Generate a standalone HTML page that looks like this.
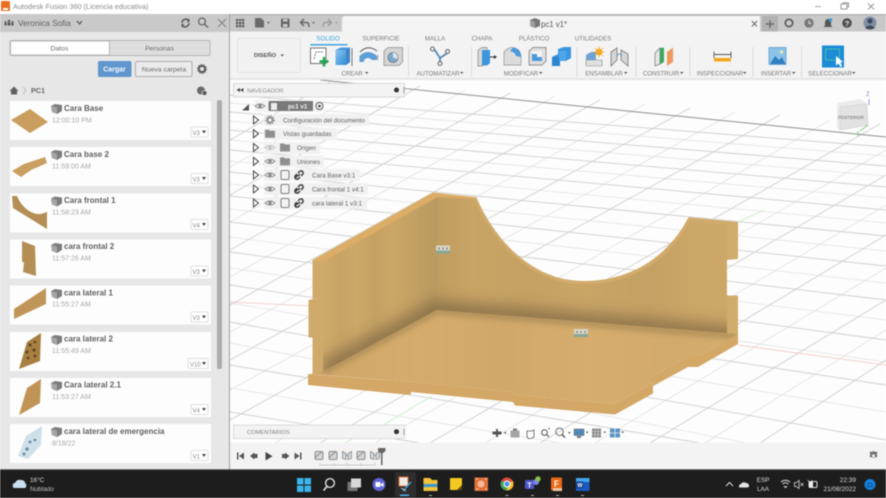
<!DOCTYPE html>
<html lang="es"><head><meta charset="utf-8"><title>Autodesk Fusion 360</title>
<style>
html,body{margin:0;padding:0;width:886px;height:498px;overflow:hidden;background:#fff}
svg{display:block;filter:blur(.45px)}
text{font-family:"Liberation Sans",sans-serif}
</style></head><body>
<svg xmlns="http://www.w3.org/2000/svg" width="886" height="498" viewBox="0 0 886 498">
<defs>
<linearGradient id="lw" x1="0" x2="1" y1="0" y2="0"><stop offset="0" stop-color="#cfaa6a"/><stop offset=".15" stop-color="#c7a365"/><stop offset=".3" stop-color="#cda868"/><stop offset=".45" stop-color="#c5a164"/><stop offset=".6" stop-color="#cba666"/><stop offset=".8" stop-color="#c3a063"/><stop offset="1" stop-color="#b99a60"/></linearGradient>
<linearGradient id="bw" x1="0" x2="1" y1="0" y2="0"><stop offset="0" stop-color="#bf9d60"/><stop offset=".12" stop-color="#c8a465"/><stop offset=".3" stop-color="#c5a163"/><stop offset=".5" stop-color="#c9a566"/><stop offset=".7" stop-color="#c4a164"/><stop offset=".85" stop-color="#cba667"/><stop offset="1" stop-color="#cda868"/></linearGradient>
<linearGradient id="fl" x1="0" x2="1" y1="0" y2="0"><stop offset="0" stop-color="#cfa668"/><stop offset=".25" stop-color="#d5ac6c"/><stop offset=".45" stop-color="#d0a869"/><stop offset=".65" stop-color="#d6ad6e"/><stop offset=".85" stop-color="#d2aa6b"/><stop offset="1" stop-color="#d6ae6f"/></linearGradient>
<linearGradient id="blue" x1="0" x2="1" y1="0" y2="1"><stop offset="0" stop-color="#8cc6ee"/><stop offset="1" stop-color="#2f8fd6"/></linearGradient>
<filter id="b3" x="-30%" y="-50%" width="160%" height="200%"><feGaussianBlur stdDeviation="7"/></filter>
<filter id="b2" x="-30%" y="-50%" width="160%" height="200%"><feGaussianBlur stdDeviation="3"/></filter>
<clipPath id="wallclip"><path d="M323 261 L437 197 L476 198 C496 245 535 284 583 284 C632 284 668 258 688 218 L738 222 L738 343 L323 372Z"/></clipPath>
<clipPath id="floorclip"><path d="M310 374 L323 371.500 L436.700 310 L738 334 L698 357 L688 357 L645 380 L653 383 L615 404 L515 395 L513 392 L411.500 382Z"/></clipPath>
<g id="cube3d"><path d="M0 2 L4 0 L11 1 L11 7 L6 10 L1 8Z" fill="#7d7d7d"/><path d="M0 2 L6 3.500 L6 10 L1 8Z" fill="#a5a5a5"/></g>
<g id="eye"><path d="M-5 0 Q0 -4 5 0 Q0 4 -5 0Z" fill="none" stroke="#8a8a8a"/><circle r="1.700" fill="#8a8a8a"/></g>
<path id="arr" d="M-2.500 -4 L2.500 0 L-2.500 4Z" fill="#fff" stroke="#444" stroke-width="1"/>
<g id="fold"><path d="M-5 -4 H-1 L0 -3 H5 V4 H-5Z" fill="#8f8f8f"/></g>
<g id="body"><rect x="-4" y="-4.500" width="8" height="9" rx="1.500" fill="#f3f3f3" stroke="#808080"/></g>
<g id="lnk" fill="none" stroke="#3a3a3a" stroke-width="1.400"><path d="M-4 3 L-1 0 M1 -4 L3 -4 L4 -3 L4 -1 L2 1 M-2 -1 L-4 1 L-4 3 L-3 4 L-1 4 L1 2 M-1 -2 L1 -4"/><path d="M-1 1 L1 -1"/></g>
<g id="tl"><rect x="-4" y="-4" width="8" height="8" rx="1.500" fill="#d5d5d5" stroke="#8c8c8c"/><path d="M-4 2 L3 -4" stroke="#8c8c8c"/></g>
<g id="tl2"><path d="M-4.500 -4 L-1 -2 L-1 4 L-4.500 3Z M4.500 -4 L1 -2 L1 4 L4.500 3Z" fill="#d5d5d5" stroke="#8c8c8c" stroke-width=".8"/><path d="M-1 0 L1 0" stroke="#5a9bd0"/></g>
<g id="badge"><rect x="-17" y="0" width="17" height="10" fill="#fff" stroke="#d6d6d6" stroke-width=".8" rx="1"/><path d="M-6 3.500 H-2 L-4 6.500Z" fill="#444"/></g>
</defs>

<rect width="886" height="498" fill="#fff"/>

<!-- Title bar -->
<rect x="0" y="0" width="886" height="14" fill="#fff"/>
<rect x="1" y="1" width="9" height="10" fill="#e96f1f" rx="1"/><rect x="3" y="8" width="5" height="2" fill="#fff"/>
<text x="13" y="9" font-size="7.300" fill="#8a8a8a">Autodesk Fusion 360 (Licencia educativa)</text>
<path d="M815 6.500H821" stroke="#aaa"/><rect x="841" y="4" width="6" height="5" fill="none" stroke="#999"/><path d="M843 4V2.800H848.500V7H847" fill="none" stroke="#999"/>
<path d="M868 3.500L874 9.500M874 3.500L868 9.500" stroke="#999"/>

<!-- Left panel -->
<rect x="0" y="14" width="230" height="456" fill="#e7e7e7"/>
<rect x="0" y="14" width="230" height="18" fill="#c9c9c9"/>
<g fill="#5a5a5a"><circle cx="9" cy="21" r="1.300"/><rect x="7.500" y="22.500" width="3" height="3"/><circle cx="5.500" cy="22" r="1"/><rect x="4.400" y="23" width="2.300" height="2.500"/><circle cx="12.500" cy="22" r="1"/><rect x="11.300" y="23" width="2.300" height="2.500"/></g>
<text x="18" y="26" font-size="8.200" fill="#5f5f5f">Veronica Sofia</text>
<path d="M77 21 L79.500 24 L82 21" fill="none" stroke="#555" stroke-width="1.200"/>
<g fill="none" stroke="#5a5a5a" stroke-width="1.500"><path d="M182 23 A4 4 0 0 1 189 20.500"/><path d="M189 23 A4 4 0 0 1 182 25.500"/></g>
<path d="M189.500 18.500V22H186.500Z M181.500 27.500V24H184.500Z" fill="#5a5a5a"/>
<circle cx="202" cy="21.500" r="3.400" fill="none" stroke="#666" stroke-width="1.300"/><path d="M204.500 24L208 27.500" stroke="#666" stroke-width="1.500"/>
<path d="M218 19L226 27M226 19L218 27" stroke="#808080" stroke-width="1"/>

<rect x="10" y="40.500" width="200" height="15" fill="#dedede" stroke="#b5b5b5" rx="1.500"/>
<rect x="10.500" y="41" width="99" height="14" fill="#fff" stroke="#b5b5b5" rx="1"/>
<text x="59.500" y="50.500" font-size="6.800" fill="#6a6a6a" text-anchor="middle">Datos</text>
<text x="159.500" y="50.500" font-size="6.800" fill="#6a6a6a" text-anchor="middle">Personas</text>
<rect x="98" y="61" width="33.500" height="16" fill="#5f96cd" rx="1.500"/>
<text x="114.500" y="71.500" font-size="7" font-weight="bold" fill="#f2f6fb" text-anchor="middle">Cargar</text>
<rect x="135.500" y="61.500" width="56.500" height="15" fill="#ebebeb" stroke="#aeaeae" rx="1.500"/>
<text x="164" y="71.500" font-size="6.800" fill="#6a6a6a" text-anchor="middle">Nueva carpeta</text>
<circle cx="202" cy="69" r="3" fill="none" stroke="#585858" stroke-width="2"/><circle cx="202" cy="69" r="4.500" fill="none" stroke="#585858" stroke-width="1" stroke-dasharray="1.500 1.300"/>
<path d="M9.500 91 L14 86.500 L18.500 91 H17V94.500H11V91Z" fill="#606060"/>
<path d="M23 87 L26 90.500 L23 94" fill="none" stroke="#c0c0c0"/>
<text x="31" y="93" font-size="7.200" font-weight="bold" fill="#666">PC1</text>
<circle cx="201" cy="90.500" r="4" fill="#6a6a6a"/><circle cx="204.500" cy="93" r="2.500" fill="#555" stroke="#e7e7e7" stroke-width=".7"/>

<!-- Cards -->
<g>
<rect x="10" y="101" width="201" height="39" fill="#fdfdfd"/>
<rect x="10" y="147" width="201" height="39" fill="#fdfdfd"/>
<rect x="10" y="193.500" width="201" height="39" fill="#fdfdfd"/>
<rect x="10" y="239.500" width="201" height="39" fill="#fdfdfd"/>
<rect x="10" y="285.500" width="201" height="39" fill="#fdfdfd"/>
<rect x="10" y="332" width="201" height="39" fill="#fdfdfd"/>
<rect x="10" y="378" width="201" height="39" fill="#fdfdfd"/>
<rect x="10" y="424" width="201" height="39" fill="#fdfdfd"/>
</g>
<g fill="#c99e5e">
<path d="M11 120 L30 109 L48 122 L30 133Z"/>
<path d="M12 171 L24 164 L45 157 L47 163 L31 170 L21 177Z"/>
<path d="M12 196 L17 196 C22 208 32 215 41 214 L47 212 L47 229 L13 208Z" fill="#b58e55"/>
<path d="M22 241 L35 246 L36 276 L23 272 L24 262 L22 262Z" fill="#b58e55"/>
<path d="M14 309 L14 319 L46 304 L46 288 Z" fill="#c09658"/>
<path d="M27 342 L41 333 L40 361 L19 369Z" fill="#a87f40"/>
<path d="M27 388 L41 379 L40 403 L19 415Z" fill="#c09456"/>
<path d="M26 436 L42 426 L41 445 L28 459 L18 456Z" fill="#cfe0ea"/>
</g>
<g fill="#5c4325"><circle cx="30" cy="345" r="1.500"/><circle cx="35" cy="342" r="1.300"/><circle cx="27" cy="352" r="1.500"/><circle cx="34" cy="350" r="1.600"/><circle cx="28" cy="358" r="1.300"/><circle cx="35" cy="356" r="1.400"/></g>
<g fill="#6f8ea5"><circle cx="30" cy="442" r="1.500"/><circle cx="27" cy="449" r="1.800"/><circle cx="35" cy="440" r="1.400"/><circle cx="24" cy="454" r="1.500"/></g>

<use href="#cube3d" x="51" y="104"/><use href="#cube3d" x="51" y="150"/><use href="#cube3d" x="51" y="196.500"/><use href="#cube3d" x="51" y="243"/><use href="#cube3d" x="51" y="289"/><use href="#cube3d" x="51" y="335"/><use href="#cube3d" x="51" y="381"/><use href="#cube3d" x="51" y="427"/>
<g font-size="8" font-weight="bold" fill="#606060">
<text x="64" y="111">Cara Base</text><text x="64" y="157">Cara base 2</text><text x="64" y="203">Cara frontal 1</text><text x="64" y="249">cara frontal 2</text><text x="64" y="295.500">cara lateral 1</text><text x="64" y="341.500">cara lateral 2</text><text x="64" y="387.500">Cara lateral 2.1</text><text x="64" y="434">cara lateral de emergencia</text>
</g>
<g font-size="7" fill="#a8a8a8">
<text x="52" y="122.500">12:00:10 PM</text><text x="52" y="168.500">11:59:00 AM</text><text x="52" y="214.500">11:58:23 AM</text><text x="52" y="260.500">11:57:26 AM</text><text x="52" y="306.500">11:55:27 AM</text><text x="52" y="353">11:55:49 AM</text><text x="52" y="399">11:53:27 AM</text><text x="52" y="445.500">8/18/22</text>
</g>
<use href="#badge" x="208" y="127"/><use href="#badge" x="208" y="173.500"/><use href="#badge" x="208" y="219.500"/><use href="#badge" x="208" y="266"/><use href="#badge" x="208" y="312"/><rect x="188" y="358.500" width="20" height="10" fill="#fff" stroke="#d6d6d6" stroke-width=".8" rx="1"/><path d="M202 362H206L204 365Z" fill="#444"/><use href="#badge" x="208" y="404.500"/><use href="#badge" x="208" y="450.500"/>
<g font-size="6" fill="#8a8a8a"><text x="192.500" y="135">V3</text><text x="192.500" y="181.500">V3</text><text x="192.500" y="227.500">V4</text><text x="192.500" y="274">V3</text><text x="192.500" y="320">V3</text><text x="190" y="366.500">V10</text><text x="192.500" y="412.500">V4</text><text x="192.500" y="458.500">V1</text></g>
<rect x="217" y="100" width="5" height="269" rx="2" fill="#acacac"/>
<rect x="229" y="14" width="1.500" height="456" fill="#a0a0a0"/>

<!-- Canvas grid -->
<rect x="230" y="79" width="656" height="364" fill="#fdfdfd"/>
<g stroke="#e2e2e2" stroke-width=".8" fill="none">
<path d="M230 103L886 156M230 121L886 176M230 140L886 198M230 161L886 223M230 184L886 251M230 209L886 283M230 237L886 320M230 268L886 362M230 303L886 412M230 343L886 470M230 388L560 443"/>
<path d="M375 84L230 167M465 90L230 222M555 96L230 277M645 104L230 332M735 112L230 390M830 120L275 443M886 150L375 443M886 205L485 443M886 268L595 443M886 330L705 443"/>
</g>
<g stroke="#cfcfcf" stroke-width=".9" fill="none">
<path d="M230 95L886 147M230 112L886 166M230 130L886 187M230 150L886 210M230 172L886 236M230 196L886 266M230 222L886 300M230 252L886 340M230 285L886 385M230 322L886 440M230 365L700 443M230 412L420 443"/>
<path d="M330 82L230 140M420 86L230 195M510 93L230 250M600 100L230 305M690 108L230 360M780 115L230 420M880 124L320 443M886 175L430 443M886 235L540 443M886 300L650 443M886 360L760 443"/>
</g>
<path d="M320 80L886 137" stroke="#8f8f8f" stroke-width="1" fill="none"/>
<path d="M230 302L312 306M738 345L886 365" stroke="#f2c4c4" stroke-width=".8" fill="none"/>
<path d="M738 222L764 210M432 396L378 428M345 443L375 426" stroke="#c4ecc0" stroke-width=".8" fill="none"/>

<!-- 3D model -->
<path d="M437 196 L476 198 C496 245 535 284 583 284 C632 284 668 258 688 218 L729 224 L727 260 L727 296 L738 296 L738 343 L436 315Z" fill="url(#bw)"/>
<path d="M323 261 L437 197 L437 312 L323 372Z" fill="url(#lw)"/>
<g clip-path="url(#wallclip)">
<path d="M437 197V312" stroke="#806a45" stroke-width="22" opacity=".4" filter="url(#b3)" fill="none"/>
<path d="M323 372L437 311L738 337" stroke="#6f5c3c" stroke-width="22" opacity=".6" filter="url(#b3)" fill="none"/>
</g>
<path d="M476.500 197.500 C496 243 535 281 583 281 C632 281 668 256 689 217 L691 217.500 L738 222 L738 259 L726.500 260 L726.500 295.500 L738 295.500 L738 343 L727 340 L727 300 L727 225 L690 221 C670 260 632 284.500 583 284.500 C535 284.500 495 247 474 199Z" fill="#d1ab6b"/>
<path d="M312.500 260 L323 261 L323 372 L312.500 374 L312.500 337.500 L308.500 337.500 L308.500 300 L321.500 297.500 L312.500 299Z" fill="#d0aa6a"/>
<path d="M312.500 260 L433 192.500 L476.700 197.300 L475 199 L437 197 L323 262Z" fill="#dbad66"/>
<path d="M308 374 L308 385 L410 395 L411.500 392 L513 402 L515 405.500 L615 414.500 L653 393.500 L653 386 L688 367 L698 367 L738 344 L738 334 L698 357 L688 357 L645 380 L653 383 L615 404 L515 395 L513 392 L411.500 382Z" fill="#d3a766"/>
<path d="M310 374 L323 371.500 L436.700 310 L738 334 L698 357 L688 357 L645 380 L653 383 L615 404 L515 395 L513 392 L411.500 382Z" fill="url(#fl)"/>
<g clip-path="url(#floorclip)"><path d="M323 372L437 311L738 336" stroke="#8f7749" stroke-width="6" opacity=".55" filter="url(#b2)" fill="none"/></g>
<rect x="436" y="245.500" width="14" height="8" fill="#d9d6c5"/><rect x="436" y="250.500" width="14" height="3" fill="#86a898"/><path d="M439 247.500v2M443 247.500v2M447 247.500v2" stroke="#666" stroke-width="1"/>
<rect x="574" y="329" width="14" height="8" fill="#d9d6c5"/><rect x="574" y="334" width="14" height="3" fill="#86a898"/><path d="M577 331v2M581 331v2M585 331v2" stroke="#666" stroke-width="1"/>

<!-- View cube -->
<path d="M837 103 L860 99 L868 104 L868 125 L840 130 L837 128Z" fill="#ebebeb"/>
<path d="M840 107 L866 104 L868 125 L840 130Z" fill="#e2e2e2" stroke="#cfcfcf" stroke-width=".6"/>
<text x="838" y="119" font-size="4.400" fill="#666">POSTERIOR</text>
<text x="866" y="96" font-size="6" fill="#8a8ad8">Z</text><path d="M869 99V105" stroke="#9c9ce0"/>
<path d="M868 125L860 131M858 131L858 136" stroke="#73d07a"/>

<!-- Navigator -->
<rect x="233.500" y="83.500" width="171" height="13.500" fill="#f3f3f3" stroke="#d8d8d8"/>
<path d="M240 88L236.500 90L240 92ZM243.500 88L240 90L243.500 92Z" fill="#444"/>
<text x="247" y="92.500" font-size="5.800" fill="#8a8a8a">NAVEGADOR</text>
<circle cx="396.500" cy="90" r="2.500" fill="#333"/><path d="M404 87v6" stroke="#999"/>
<path d="M242 110.500 L249 104 V110.500Z" fill="#555"/>
<rect x="255" y="100" width="66" height="12" fill="#f2f2f2" opacity=".9"/>
<use href="#eye" x="260" y="106"/>
<rect x="268.500" y="101" width="44.500" height="10" fill="#7a7a7a" rx="1"/>
<rect x="271" y="103" width="6" height="7" fill="#eee"/>
<text x="288" y="108.500" font-size="6.200" font-weight="bold" fill="#f5f5f5">pc1 v1</text>
<circle cx="319.500" cy="106" r="3.500" fill="#fff" stroke="#555"/><circle cx="319.500" cy="106" r="1.300" fill="#333"/>
<g fill="#f1f1f1">
<rect x="264" y="114" width="105" height="12"/><rect x="264" y="128" width="73" height="12"/><rect x="264" y="142" width="56" height="12"/><rect x="264" y="155.500" width="60" height="12"/><rect x="264" y="169" width="96" height="12"/><rect x="264" y="183" width="104" height="12"/><rect x="264" y="197" width="103" height="12"/>
</g>
<use href="#arr" x="256" y="120"/><use href="#arr" x="256" y="133.700"/><use href="#arr" x="256" y="147.500"/><use href="#arr" x="256" y="161.400"/><use href="#arr" x="256" y="175"/><use href="#arr" x="256" y="189"/><use href="#arr" x="256" y="203"/>
<circle cx="270" cy="120" r="2.500" fill="none" stroke="#808080" stroke-width="1.500"/><circle cx="270" cy="120" r="4" fill="none" stroke="#808080" stroke-width="1.300" stroke-dasharray="1.500 1.200"/>
<use href="#fold" x="270" y="133.700"/>
<use href="#eye" x="270" y="147.500" opacity=".45"/><use href="#fold" x="285" y="147.500"/>
<use href="#eye" x="270" y="161.400"/><use href="#fold" x="285" y="161.400"/>
<use href="#eye" x="270" y="175"/><use href="#body" x="285" y="175"/><use href="#lnk" x="299" y="175"/>
<use href="#eye" x="270" y="189"/><use href="#body" x="285" y="189"/><use href="#lnk" x="299" y="189"/>
<use href="#eye" x="270" y="203"/><use href="#body" x="285" y="203"/><use href="#lnk" x="299" y="203"/>
<g font-size="6.300" fill="#5e5e5e">
<text x="283" y="122.500">Configuración del documento</text><text x="283" y="136.200">Vistas guardadas</text><text x="297" y="150">Origen</text><text x="297" y="163.900">Uniones</text><text x="312" y="177.500">Cara Base v3:1</text><text x="312" y="191.500">Cara frontal 1 v4:1</text><text x="312" y="205.500">cara lateral 1 v3:1</text>
</g>

<!-- Top bar -->
<rect x="230" y="14" width="656" height="17.500" fill="#c8c8c8"/>
<path d="M345 16 H760 V32 H342 V19 Q342 16 345 16Z" fill="#f4f4f4"/>
<rect x="230" y="14" width="656" height="1.500" fill="#b5b5b5"/>
<g fill="#555"><rect x="236" y="19" width="2.200" height="2.200"/><rect x="239" y="19" width="2.200" height="2.200"/><rect x="242" y="19" width="2.200" height="2.200"/><rect x="236" y="22" width="2.200" height="2.200"/><rect x="239" y="22" width="2.200" height="2.200"/><rect x="242" y="22" width="2.200" height="2.200"/><rect x="236" y="25" width="2.200" height="2.200"/><rect x="239" y="25" width="2.200" height="2.200"/><rect x="242" y="25" width="2.200" height="2.200"/></g>
<path d="M255 18H261L264 21V27.500H255Z" fill="#6a6a6a"/><path d="M267 22H270L268.500 24Z" fill="#666"/>
<rect x="281" y="18.500" width="8.500" height="9" fill="#666" rx="1"/><rect x="283" y="19" width="4.500" height="2.500" fill="#ccc"/><rect x="283" y="24" width="4.500" height="3" fill="#ccc"/>
<path d="M304 19 L300.500 22.500 L304 26 M301 22.500 H307 Q309 23 309 27" fill="none" stroke="#666" stroke-width="1.500"/><path d="M312 22H315L313.500 24Z" fill="#666"/>
<path d="M328 19L331.500 22.500L328 26M331 22.500H325Q323 23 323 27" fill="none" stroke="#9a9a9a" stroke-width="1.400"/><path d="M335 22H338L336.500 24Z" fill="#a5a5a5"/>
<path d="M530 20 L535 18 L540 20 V26 L535 28 L530 26Z" fill="#777"/><path d="M530 20L535 22V28L530 26Z" fill="#a0a0a0"/>
<text x="541" y="27" font-size="7.800" fill="#555">pc1 v1*</text>
<path d="M752 21L757 26.500M757 21L752 26.500" stroke="#666"/>
<rect x="762" y="16" width="16" height="16" fill="#b2b2b2"/><path d="M770 20.500V28M766 24H774" stroke="#6c6c6c" stroke-width="1.400"/>
<circle cx="789" cy="23" r="3.700" fill="none" stroke="#555" stroke-width="1.600"/>
<circle cx="809" cy="23" r="4.700" fill="#7a7a7a"/><path d="M809 20.500V23.500H811.500" stroke="#ddd" fill="none"/>
<path d="M828 19 Q831 19 831 23 V25.500 L832.500 27 H823.500 L825 25.500 V23 Q825 19 828 19Z" fill="#555"/><circle cx="830.500" cy="20" r="1.700" fill="#2f9ae0"/>
<circle cx="847" cy="23" r="4.800" fill="#4f4f4f"/><text x="847" y="25.800" font-size="7.500" font-weight="bold" fill="#eee" text-anchor="middle">?</text>
<circle cx="870" cy="23" r="6.500" fill="#7f90a5"/><circle cx="870" cy="21" r="2.600" fill="#3e4a5a"/><path d="M865 28 Q870 23 875 28 Q870 31 865 28Z" fill="#3e4a5a"/>

<!-- Ribbon -->
<rect x="230" y="31.500" width="656" height="47.500" fill="#f3f3f3"/>
<rect x="230" y="78" width="656" height="2" fill="#e6e6e6"/>
<g font-size="6.200" fill="#7b7b7b" text-anchor="middle">
<text x="328" y="40.500" fill="#3da6e0">SOLIDO</text><text x="381" y="40.500">SUPERFICIE</text><text x="435" y="40.500">MALLA</text><text x="482" y="40.500">CHAPA</text><text x="534" y="40.500">PLÁSTICO</text><text x="593" y="40.500">UTILIDADES</text>
</g>
<rect x="310.500" y="44" width="37" height="1.500" fill="#3da6e0"/>
<rect x="237.500" y="38.500" width="63" height="34" rx="2" fill="#f1f1f1" stroke="#e0e0e0"/>
<text x="265" y="57" font-size="5.800" font-weight="bold" fill="#555" text-anchor="middle">DISEÑO</text><path d="M280.500 54.500H284L282.200 56.500Z" fill="#555"/>
<g font-size="6.100" fill="#7a7a7a" text-anchor="middle">
<text x="352" y="75.300">CREAR</text><text x="438" y="75.300">AUTOMATIZAR</text><text x="521" y="75.300">MODIFICAR</text><text x="604" y="75.300">ENSAMBLAR</text><text x="661" y="75.300">CONSTRUIR</text><text x="720" y="75.300">INSPECCIONAR</text><text x="776" y="75.300">INSERTAR</text><text x="830" y="75.300">SELECCIONAR</text>
</g>
<g fill="#555"><path d="M365 72H368.500L366.700 74Z"/><path d="M460 72H463.500L461.700 74Z"/><path d="M539 72H542.500L540.700 74Z"/><path d="M624 72H627.500L625.700 74Z"/><path d="M680 72H683.500L681.700 74Z"/><path d="M743 72H746.500L744.700 74Z"/><path d="M792 72H795.500L793.700 74Z"/><path d="M852 72H855.500L853.700 74Z"/></g>
<g stroke="#dcdcdc"><path d="M408.500 47V77M471.500 47V77M577 47V77M636 47V77M690 47V77M753 47V77M801.500 47V77"/></g>

<!-- Ribbon icons -->
<rect x="310.500" y="48" width="15.500" height="15.500" fill="#fff" stroke="#666" stroke-width=".9"/><path d="M314 59 L316 52 H323" fill="none" stroke="#777" stroke-dasharray="2 1"/>
<path d="M324 57V66.500M319.500 61.500H328.500" stroke="#19a24a" stroke-width="2.400"/>
<path d="M335.500 50 L341 47.500 H350 V62 L346 65 H335.500Z" fill="#4a97dc"/><path d="M335.500 50H346V65H335.500Z" fill="url(#blue)"/><path d="M346 50L350 47.500V62L346 65Z" fill="#3f85c8"/><path d="M352 48V66" stroke="#555" stroke-width=".8"/>
<path d="M359.500 62 V56 Q368 48 377 56 V60 H372 Q368 56 364 60 V62Z" fill="#5d9fd8"/><path d="M360 52 Q368 44 377 51" fill="none" stroke="#555"/><path d="M377 56 V60 L378 59 V55Z" fill="#ccc" stroke="#999" stroke-width=".5"/>
<path d="M384 51 L388 47.500 H402.500 V62 L399 65.500 H384Z" fill="#d6d6d6" stroke="#8f8f8f" stroke-width=".8"/><circle cx="393" cy="57.500" r="5" fill="#7aa9d2" stroke="#777" stroke-width=".8"/><path d="M393 57.500 V52.500 A5 5 0 0 1 397.500 59Z" fill="#e4e4e4"/>
<g stroke="#4d87b5" stroke-width="1.700" fill="none"><path d="M434 49L440 58L449 52M440 58V65"/></g><circle cx="432.500" cy="49" r="2" fill="#e8e8e8" stroke="#666"/><circle cx="447.500" cy="51.500" r="2" fill="#e8e8e8" stroke="#666"/><circle cx="440" cy="63.500" r="2" fill="#e8e8e8" stroke="#666"/>
<path d="M478 50 L482 47.500 H487 V63 L482 66 H478Z" fill="#d8d8d8" stroke="#888" stroke-width=".7"/><path d="M482 50 H490 V63 L487 65.500 H482Z" fill="#3d95dc"/><path d="M490 57H495" stroke="#333" stroke-width="1"/><path d="M494 55 L497 57 L494 59Z" fill="#333"/>
<path d="M504 52 Q508 47 513 47.500 Q521 49 521 57 V65 H504Z" fill="#dcdcdc" stroke="#909090" stroke-width=".7"/><path d="M513 47.500 Q521 49 521 57 L516 56 Q515 52 510 51Z" fill="#4b9ade"/>
<path d="M529 51 L533 47.500 H546 V61 L542 65 H529Z" fill="#dedede" stroke="#777" stroke-width=".7"/><path d="M532 51H542V61H532Z" fill="#f4f4f4"/><path d="M532 61V54H537V57H542V61Z" fill="#4b9ade"/>
<path d="M552 57 L558 54 V49 L564 47 L571 47 V58 L566 61 H560 V66 L553 66Z" fill="#3d97e0"/><path d="M552 57H560V66H552Z" fill="#2b86d2"/><path d="M559 51H566V61H559Z" fill="#4fa6ea"/>
<path d="M586 55 L591 52 H596 V66 H586Z" fill="#6ea2d6"/><path d="M591 60 H602 V66 H586V60Z" fill="#dfdfdf" stroke="#8a8a8a" stroke-width=".6"/><circle cx="599" cy="52" r="3.300" fill="#f5a623"/><path d="M599 46.500V57.500M593.500 52H604.500M595 48L603 56M603 48L595 56" stroke="#f5a623" stroke-width=".8"/>
<path d="M611 52 L617 48 V60 L611 66Z M621 50 L628 54 V66 L621 60Z" fill="#d5d5d5" stroke="#777" stroke-width=".8"/><path d="M617 56 Q619 52 622 56" fill="none" stroke="#6aa0d0"/>
<path d="M655 53 L660 48 V64 L655 66Z" fill="#e5e5e5" stroke="#777" stroke-width=".7"/><path d="M660 48 L664 47.500 V62 L660 64.500Z" fill="#3aa85f"/><path d="M667 52 L673 47.500 V62 L667 66Z" fill="#ec9a5f"/>
<path d="M714 51.500V58M731 51.500V58M714 54.500H731" stroke="#555" stroke-width=".9"/><rect x="714" y="58" width="17" height="3.500" fill="#f0a81f"/>
<rect x="769" y="47.500" width="17" height="17" fill="#8ec3e8" stroke="#5e9bd0" stroke-width=".8"/><path d="M770 64 L775 56 L779 60 L782 57 L785.500 64Z" fill="#2f7fc0"/><circle cx="781.500" cy="52" r="1.500" fill="#fdf2b0"/>
<rect x="822" y="45.500" width="22" height="22" fill="#1a8dd6"/><rect x="825.500" y="49" width="14" height="11" fill="none" stroke="#6fd59a" stroke-dasharray="1.500 1"/><path d="M836 56 V65.500 L838.500 63.500 L840.500 67 L842 66 L840.500 62.500 L843 62Z" fill="#fff"/>

<!-- Bottom timeline -->
<rect x="233.500" y="425" width="171" height="13.500" fill="#f3f3f3" stroke="#dcdcdc"/>
<text x="247" y="434" font-size="5.800" fill="#808080">COMENTARIOS</text>
<circle cx="396.500" cy="431.700" r="2.500" fill="#333"/><path d="M404 429v6" stroke="#999"/>
<rect x="230" y="442.500" width="656" height="27.500" fill="#f3f3f3"/>
<g fill="#555"><path d="M237 452.500h1.500v7H237Z M244 452.500V459.500L239 456Z"/><path d="M254.500 452.500V459.500L250 456Z M254.500 454h3v4h-3Z"/><path d="M265.500 452V460.500L272.500 456.300Z" fill="#444"/><path d="M282 454h3v4h-3Z M285 452.500V459.500L289.500 456Z"/><path d="M294.500 452.500V459.500L299.500 456Z M300 452.500h1.500v7H300Z"/></g>
<use href="#tl" x="319" y="455.500"/><use href="#tl" x="333" y="455.500"/><use href="#tl2" x="347" y="455.500"/><use href="#tl" x="361" y="455.500"/><use href="#tl2" x="375" y="455.500"/>
<path d="M320 463V465H375V463M334 463V465M347 463V465M361 463V465" fill="none" stroke="#bdbdbd" stroke-width=".8"/>
<path d="M378 448H385.500V451L382.500 453.500V465H381V453.500L378 451Z" fill="#666"/>
<path d="M873 451.500 l1 1.500 2 -.5 1 1.500 -1 1.500 1 1.500 -1 1.500 -2 -.5 -1 1.500 -1 -1.500 -2 .5 -1 -1.500 1 -1.500 -1 -1.500 1 -1.500 2 .5Z" fill="#6f6f6f" transform="translate(.5 -1)"/><circle cx="873.500" cy="455.700" r="1.500" fill="#f3f3f3"/>

<!-- Nav bar -->
<g fill="#555">
<path d="M496 429h2v8h-2Z M492.500 431.500h9v3h-9Z"/><path d="M504 432H506.500L505.200 434Z"/>
<rect x="510.500" y="430.500" width="9" height="7" fill="#a5a5a5"/><rect x="513" y="428.500" width="4" height="2" fill="#777"/>
<path d="M527 436 V431 H532 L534 430 V437 L531 438.500 H528Z" fill="#fff" stroke="#555" stroke-width=".8"/>
<circle cx="544.500" cy="432.500" r="2.800" fill="none" stroke="#555"/><path d="M546.500 434.500L549 437" stroke="#555"/><path d="M548 428.500h2M549 427.500v2" stroke="#555" stroke-width=".6"/>
<circle cx="559.500" cy="431.800" r="3.700" fill="none" stroke="#666"/><path d="M562 434.500L565 437.500" stroke="#333" stroke-width="1.200"/><path d="M568 432H570.500L569.200 434Z"/>
<rect x="574" y="429" width="10" height="6.500" fill="#4e88b8" stroke="#777" stroke-width=".6"/><rect x="577" y="436" width="4" height="2" fill="#777"/><path d="M586 431.500H588.500L587.200 433.500Z"/>
<rect x="592" y="428.500" width="9" height="9" fill="#8a8a8a"/><path d="M595 428.500v9M598 428.500v9M592 431.500h9M592 434.500h9" stroke="#ddd" stroke-width=".5"/><path d="M603.500 431.500H606L604.700 433.500Z"/>
<rect x="610" y="428.500" width="10" height="9" fill="#5f93c2"/><path d="M615 428.500v9M610 433h10" stroke="#e5eef6" stroke-width=".8"/><path d="M621.500 431.500H624L622.700 433.500Z"/>
</g>

<!-- Taskbar -->
<rect x="0" y="470" width="886" height="28" fill="#1d1d1d"/>
<rect x="0" y="469.300" width="886" height="1" fill="#3a3a3a"/>
<path d="M13 487 Q12 483 15 483 Q17 479 21 480 Q25 480 25 483 Q27 484 26 487 Q26 488 24 488 H15 Q13 488 13 487Z" fill="#c9dff2"/>
<text x="30" y="482" font-size="6.400" fill="#dcdcdc">16°C</text>
<text x="30" y="491" font-size="6.400" fill="#bdbdbd">Nublado</text>
<g fill="#3bb4ec"><rect x="297" y="478" width="6.500" height="6.500"/><rect x="304.500" y="478" width="6.500" height="6.500"/><rect x="297" y="485.500" width="6.500" height="6.500"/><rect x="304.500" y="485.500" width="6.500" height="6.500"/></g>
<circle cx="330" cy="483" r="4.400" fill="none" stroke="#e8e8e8" stroke-width="1.300"/><path d="M327 486.500L323.500 490.500" stroke="#e8e8e8" stroke-width="1.600"/>
<rect x="347.500" y="482" width="10" height="9" fill="#777"/><rect x="351" y="478.500" width="10" height="9" fill="#d8d8d8"/>
<circle cx="379" cy="484.500" r="6.500" fill="#6264d4"/><rect x="375.500" y="482" width="5" height="5" rx="1" fill="#fff"/><path d="M381 484 L383.500 482.500 V487 L381 485.500Z" fill="#fff"/>
<rect x="395" y="472" width="21" height="25" rx="2" fill="#2e2e2e"/>
<rect x="399" y="477" width="9" height="9" fill="#f0ece4" stroke="#d9693a"/><path d="M403 491 L411 482" stroke="#3b9ad9" stroke-width="1.500"/><path d="M401 488 L406 491" stroke="#ccc"/>
<rect x="400" y="494.500" width="9" height="1.500" fill="#4db3ee"/>
<path d="M423.500 478 H430 L432 480 H437.500 V491 H423.500Z" fill="#f3c33a"/><rect x="423.500" y="484" width="14" height="3" fill="#3a94cf"/><rect x="429" y="495" width="3" height="1" fill="#aaa"/>
<rect x="450" y="478" width="12" height="12" fill="#f3c81f"/><path d="M457 490 L462 485 V490Z" fill="#5a4a10"/>
<rect x="474.500" y="477.500" width="13.500" height="13.500" fill="#e0703a"/><circle cx="481" cy="484" r="3.500" fill="#f4b99a"/><path d="M476 479h2M485 479h2M476 489h2M485 489h2" stroke="#f4c9b0"/>
<circle cx="507" cy="484" r="6.500" fill="#dd4b3e"/><path d="M507 484 L512.600 480.800 A6.500 6.500 0 0 1 507 490.500Z" fill="#f6c02c"/><path d="M507 490.500 A6.500 6.500 0 0 1 501.400 480.800 L507 484Z" fill="#3aa757"/><circle cx="507" cy="484" r="3" fill="#4a8cf0" stroke="#fff"/><rect x="505.500" y="495" width="3" height="1" fill="#aaa"/>
<rect x="525" y="480" width="9" height="9" rx="1" fill="#5059c9"/><circle cx="536" cy="482" r="3" fill="#7b83eb"/><text x="529.500" y="487.500" font-size="7" font-weight="bold" fill="#fff" text-anchor="middle">T</text><circle cx="538" cy="479" r="2.700" fill="#8bc34a"/><rect x="531" y="495" width="3" height="1" fill="#aaa"/>
<rect x="551" y="477.500" width="11" height="13" fill="#e86a17" rx="1"/><text x="556.500" y="486.500" font-size="8" font-weight="bold" fill="#fff" text-anchor="middle">F</text><rect x="553" y="488" width="9" height="3" fill="#f2c6a0"/><rect x="556" y="495" width="3" height="1" fill="#aaa"/>
<rect x="576" y="478" width="13.500" height="13" fill="#185abd" rx="1"/><rect x="576" y="478" width="13.500" height="4" fill="#41a5ee"/><rect x="576.500" y="481.500" width="7" height="6.500" fill="#103f91"/><text x="580" y="487" font-size="5.500" font-weight="bold" fill="#fff" text-anchor="middle">W</text><rect x="581" y="495" width="3" height="1" fill="#aaa"/>
<path d="M726 486L729.500 482.500L733 486" fill="none" stroke="#ddd"/>
<path d="M739 487 Q739 484 741 484 Q743 481 746 483 Q749 483 749 486 Q749 487.500 747 487.500 H741 Q739 487.500 739 487Z" fill="#e5e5e5"/>
<text x="763" y="482" font-size="6.400" fill="#dcdcdc" text-anchor="middle">ESP</text>
<text x="763" y="491" font-size="6.400" fill="#dcdcdc" text-anchor="middle">LAA</text>
<path d="M781 482 Q785.500 478.500 790 482 M782.500 484 Q785.500 481.500 788.500 484 M784 486 L785.500 487.500 L787 486" fill="none" stroke="#ddd"/>
<path d="M794.500 482.500H796.500L799 480.500V488.500L796.500 486.500H794.500Z" fill="none" stroke="#ddd" stroke-width=".8"/><path d="M800.500 483L803.500 486M803.500 483L800.500 486" stroke="#ddd" stroke-width=".7"/>
<rect x="809" y="481.500" width="8" height="6" rx="1" fill="none" stroke="#ddd"/><rect x="809.500" y="482" width="3.500" height="5" fill="#eee"/><path d="M807.500 480L809.500 482M812 480V481.500" stroke="#ddd" stroke-width=".7"/>
<text x="856" y="482" font-size="6.500" fill="#dcdcdc" text-anchor="end">22:39</text>
<text x="856" y="491" font-size="6.500" fill="#dcdcdc" text-anchor="end">21/08/2022</text>
<circle cx="870" cy="484.500" r="5.500" fill="#1583e0"/><text x="870" y="487" font-size="6.400" fill="#08284a" text-anchor="middle">21</text>
</svg>
</body></html>
